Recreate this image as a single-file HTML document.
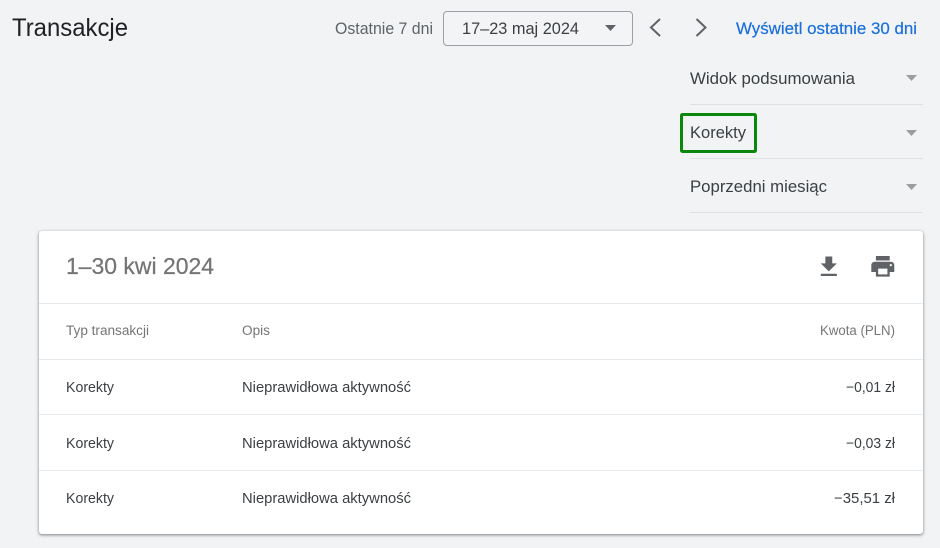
<!DOCTYPE html>
<html lang="pl">
<head>
<meta charset="utf-8">
<title>Transakcje</title>
<style>
html,body{margin:0;padding:0;width:940px;height:548px;overflow:hidden;background:#f1f3f5;}
#card{position:absolute;left:39px;top:231px;width:884px;height:303px;background:#fff;border-radius:3px;box-shadow:0 1px 2px 0 rgba(60,64,67,.45),0 1px 3px 1px rgba(60,64,67,.18);}
svg{position:absolute;left:0;top:0;filter:blur(.3px);}
text{font-family:"Liberation Sans",sans-serif;}
</style>
</head>
<body>
<div id="card"></div>
<svg width="940" height="548" viewBox="0 0 940 548" xmlns="http://www.w3.org/2000/svg">
  <text x="12" y="36" font-size="25" fill="#202124" textLength="116" lengthAdjust="spacingAndGlyphs">Transakcje</text>
  <text x="335" y="34" font-size="16.500" fill="#5f6368" textLength="98" lengthAdjust="spacingAndGlyphs">Ostatnie 7 dni</text>
  <rect x="443.500" y="11.500" width="189" height="34" rx="3.500" fill="#f3f4f6" stroke="#9aa0a6" stroke-width="1"/>
  <text x="462" y="34" font-size="16.500" fill="#3c4043" textLength="117" lengthAdjust="spacingAndGlyphs">17–23 maj 2024</text>
  <path d="M605 25h11l-5.500 6z" fill="#5f6368"/>
  <path d="M660 19l-9 8.500 9 8.500" fill="none" stroke="#5f6368" stroke-width="2"/>
  <path d="M696.500 19l9 8.500-9 8.500" fill="none" stroke="#5f6368" stroke-width="2"/>
  <text x="736" y="34" font-size="16.500" fill="#1a6fdc" stroke="#1a6fdc" stroke-width=".2" textLength="181" lengthAdjust="spacingAndGlyphs">Wyświetl ostatnie 30 dni</text>

  <text x="690" y="84" font-size="16.500" fill="#3c4043" textLength="165" lengthAdjust="spacingAndGlyphs">Widok podsumowania</text>
  <path d="M906 75h11l-5.500 6z" fill="#9a9da1"/>
  <rect x="690" y="104" width="233" height="1" fill="#dfe1e5"/>
  <text x="690" y="138" font-size="16.500" fill="#3c4043" textLength="56" lengthAdjust="spacingAndGlyphs">Korekty</text>
  <path d="M906 130h11l-5.500 6z" fill="#9a9da1"/>
  <rect x="690" y="158" width="233" height="1" fill="#dfe1e5"/>
  <rect x="681.500" y="114.500" width="74" height="37" rx="1" fill="none" stroke="#0b870b" stroke-width="3"/>
  <text x="690" y="192" font-size="16.500" fill="#3c4043" textLength="137" lengthAdjust="spacingAndGlyphs">Poprzedni miesiąc</text>
  <path d="M906 184h11l-5.500 6z" fill="#9a9da1"/>
  <rect x="690" y="212" width="233" height="1" fill="#dfe1e5"/>

  <text x="66" y="274" font-size="23" fill="#757575" stroke="#757575" stroke-width=".25" textLength="148" lengthAdjust="spacingAndGlyphs">1–30 kwi 2024</text>
  <g transform="translate(815 253) scale(1.150)" fill="#5f6368"><path d="M19 9h-4V3H9v6H5l7 7 7-7zM5 18v2h14v-2H5z"/></g>
  <g transform="translate(869 252.500) scale(1.150)" fill="#5f6368"><path d="M19 8H5c-1.660 0-3 1.340-3 3v6h4v4h12v-4h4v-6c0-1.660-1.340-3-3-3zm-3 11H8v-5h8v5zm3-7c-.55 0-1-.45-1-1s.45-1 1-1 1 .45 1 1-.45 1-1 1zm-1-9H6v4h12V3z"/></g>
  <rect x="39" y="303" width="884" height="1" fill="#e8eaed"/>
  <text x="66" y="335" font-size="13.500" fill="#757575" textLength="83" lengthAdjust="spacingAndGlyphs">Typ transakcji</text>
  <text x="242" y="335" font-size="13.500" fill="#757575" textLength="28" lengthAdjust="spacingAndGlyphs">Opis</text>
  <text x="820" y="335" font-size="13.500" fill="#757575" textLength="75" lengthAdjust="spacingAndGlyphs">Kwota (PLN)</text>
  <rect x="39" y="359" width="884" height="1" fill="#e8eaed"/>
  <text x="66" y="392" font-size="14.500" fill="#3c4043" textLength="48" lengthAdjust="spacingAndGlyphs">Korekty</text>
  <text x="242" y="392" font-size="14.500" fill="#3c4043" textLength="169" lengthAdjust="spacingAndGlyphs">Nieprawidłowa aktywność</text>
  <text x="846" y="392" font-size="14.500" fill="#3c4043" textLength="49" lengthAdjust="spacingAndGlyphs">−0,01 zł</text>
  <rect x="39" y="414" width="884" height="1" fill="#e8eaed"/>
  <text x="66" y="448" font-size="14.500" fill="#3c4043" textLength="48" lengthAdjust="spacingAndGlyphs">Korekty</text>
  <text x="242" y="448" font-size="14.500" fill="#3c4043" textLength="169" lengthAdjust="spacingAndGlyphs">Nieprawidłowa aktywność</text>
  <text x="846" y="448" font-size="14.500" fill="#3c4043" textLength="49" lengthAdjust="spacingAndGlyphs">−0,03 zł</text>
  <rect x="39" y="470" width="884" height="1" fill="#e8eaed"/>
  <text x="66" y="503" font-size="14.500" fill="#3c4043" textLength="48" lengthAdjust="spacingAndGlyphs">Korekty</text>
  <text x="242" y="503" font-size="14.500" fill="#3c4043" textLength="169" lengthAdjust="spacingAndGlyphs">Nieprawidłowa aktywność</text>
  <text x="834" y="503" font-size="14.500" fill="#3c4043" textLength="61" lengthAdjust="spacingAndGlyphs">−35,51 zł</text>
</svg>
</body>
</html>
